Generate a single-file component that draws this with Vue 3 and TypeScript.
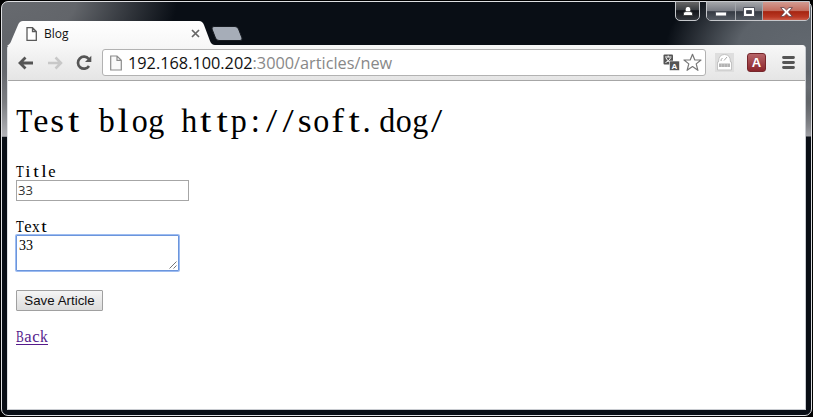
<script setup lang="ts">
interface Glyph {
  char: string
  x: number
  width: number
}

// Drawn advance, in em, of the letters that differ from the default width.
const advances: Record<string, number> = {
  T: 0.485,
  B: 0.485,
  i: 0.33,
  l: 0.34,
  t: 0.345,
  f: 0.39,
  s: 0.42,
  e: 0.46,
  '/': 0.34,
  ':': 0.278,
  '.': 0.25,
  ' ': 0.25,
  a: 0.46,
  c: 0.46,
}

function layOut(text: string, size: number): Glyph[] {
  const cell = size / 2
  return Array.from(text, (char, i) => {
    const width = (advances[char] ?? 0.485) * size
    const inset = char === '.' ? 0 : (cell - width) / 2
    return { char, x: i * cell + inset, width }
  })
}

const heading = layOut('Test blog http://soft.dog/', 33)
const titleLabel = layOut('Title', 16)
const textLabel = layOut('Text', 16)
const backLabel = layOut('Back', 16)

const title: string = '33'
const body: string = '33'
</script>

<template>
  <div class="desktop">
    <div class="window">
      <header class="titlebar">
        <div class="tab">
          <svg class="tab-shape" width="210" height="25" viewBox="0 0 210 25">
            <defs>
              <linearGradient id="tabfill" x1="0" y1="0" x2="0" y2="1">
                <stop offset="0" stop-color="#fff" />
                <stop offset="1" stop-color="#f7f7f7" />
              </linearGradient>
            </defs>
            <path d="M0 25C3 23 4 21 5 18L11 4Q12.5 0 16 0H192Q195.500 0 197 4L203 20Q204.500 24 208 24V25Z" fill="url(#tabfill)" />
          </svg>
          <svg class="tab-page" width="12" height="14" viewBox="0 0 12 14">
            <path d="M1 .7H6.500L10.300 4.500V13.300H1ZM6.500 .7V4.500H10.300" fill="#fff" stroke="#5a5a5a" stroke-width="1.3" />
          </svg>
          <span class="tab-name">Blog</span>
          <svg class="tab-close" width="9" height="9" viewBox="0 0 9 9">
            <path d="M1 1L8 8M8 1L1 8" stroke="#666" stroke-width="1.7" />
          </svg>
        </div>
        <svg class="new-tab" width="32" height="15" viewBox="0 0 32 15">
          <path d="M3 .5H24Q26.500 .5 27.500 3L31 12Q31.500 14.500 29 14.500H8Q5.500 14.500 4.500 12L1 3Q.5 .5 3 .5Z" fill="#a6adb8" stroke="#171b21" />
        </svg>
        <div class="controls">
          <div class="control user">
            <svg width="12" height="10" viewBox="0 0 12 10">
              <path d="M1.500 9.500V7Q2 5.700 4 5.500Q3.200 4.500 3.200 3.200A2.800 2.800 0 0 1 8.800 3.200Q8.800 4.500 8 5.500Q10 5.700 10.500 7V9.500Z" fill="#fff" stroke="#333" stroke-width=".8" />
              <path d="M4 5.600H8" stroke="#444" stroke-width=".8" />
            </svg>
          </div>
          <div class="group">
            <div class="control minimize">
              <svg width="12" height="10" viewBox="0 0 12 10">
                <rect x=".5" y="5" width="11" height="4" fill="#fff" stroke="#51545e" />
              </svg>
            </div>
            <div class="control maximize">
              <svg width="12" height="10" viewBox="0 0 12 10">
                <path d="M.5 .5H11.500V9.500H.5ZM3.500 3.500V6.500H8.500V3.500Z" fill="#fff" stroke="#51545e" fill-rule="evenodd" />
              </svg>
            </div>
            <div class="control close">
              <svg width="13" height="10" viewBox="0 0 13 10">
                <path d="M.6 .6H4L6.500 3L9 .6H12.400L8.500 5L12.400 9.400H9L6.500 7L4 9.400H.6L4.500 5Z" fill="#fff" stroke="#66434a" stroke-width=".9" />
              </svg>
            </div>
          </div>
        </div>
      </header>

      <div class="browser">
        <nav class="toolbar">
          <svg class="nav-icon" width="16" height="14" viewBox="0 0 16 14">
            <path d="M15 7H2.500M7.500 1.500L2 7L7.500 12.500" fill="none" stroke="#555" stroke-width="2.8" />
          </svg>
          <svg class="nav-icon forward" width="16" height="14" viewBox="0 0 16 14">
            <path d="M1 7H13.500M8.500 1.500L14 7L8.500 12.500" fill="none" stroke="#c8c8c8" stroke-width="2.5" />
          </svg>
          <svg class="nav-icon reload" width="16" height="16" viewBox="0 0 16 16">
            <path d="M12.700 4A6 6 0 1 0 13 11" fill="none" stroke="#555" stroke-width="2.700" />
            <path d="M15.300 .7V7H9Z" fill="#555" />
          </svg>
          <div class="address">
            <svg class="address-page" width="12" height="16" viewBox="0 0 12 16">
              <path d="M.7 1H7L11.300 5.300V15H.7ZM7 1V5.300H11.300" fill="#fafafa" stroke="#8c8c8c" stroke-width="1.200" />
            </svg>
            <span class="url">192.168.100.202<span class="path">:3000/articles/new</span></span>
            <svg class="translate" width="17" height="17" viewBox="0 0 17 17">
              <rect x=".5" y=".5" width="9.500" height="10" rx="1" fill="#555" />
              <path d="M2 3H8.500M5.200 1.500V3M3 4Q4.500 7.500 8 8.500M7.500 4Q6 7.500 2.500 8.500" fill="none" stroke="#fff" stroke-width="1" />
              <rect x="6.500" y="7" width="10" height="9.500" rx="1" fill="#555" stroke="#fff" stroke-width=".6" />
              <text x="11.500" y="14.700" text-anchor="middle" font-family="Liberation Sans, sans-serif" font-weight="bold" font-size="8" fill="#fff">A</text>
            </svg>
            <svg class="star" width="19" height="19" viewBox="0 0 19 19">
              <path d="M9.500 1.300L11.800 7H18L13.200 10.900L14.900 17.300L9.500 13.600L4.100 17.300L5.800 10.900L1 7H7.200Z" fill="#fff" stroke="#777" stroke-width="1.200" stroke-linejoin="round" />
            </svg>
          </div>
          <svg class="lock" width="19" height="19" viewBox="0 0 19 19">
            <rect width="19" height="19" fill="#dedede" />
            <path d="M3.500 9Q3.500 1.500 9.500 1.500T15.500 9H16.500V17H2.500V9Z" fill="#fff" stroke="#c3c3c3" />
            <path d="M6 8A3.500 3.500 0 0 1 7.500 5M9 7.500L12 4" fill="none" stroke="#aaa" />
            <path d="M4 10.500H15V14H4Z" fill="#b3b3b3" />
            <path d="M6.500 11V14M9.500 11V14M12.500 11V14" stroke="#ccc" stroke-width=".7" />
          </svg>
          <div class="extension">A</div>
          <svg class="menu" width="13" height="13" viewBox="0 0 13 13">
            <path d="M1.500 1.500H11.500M1.500 6.500H11.500M1.500 11.500H11.500" stroke="#555" stroke-width="2.800" stroke-linecap="round" />
          </svg>
        </nav>

        <main class="page">
          <h1 class="heading">
            <svg width="440" height="44">
              <text y="31"><tspan v-for="(g, i) in heading" :key="i" :x="g.x" :textLength="g.width" lengthAdjust="spacingAndGlyphs">{{ g.char }}</tspan></text>
            </svg>
          </h1>
          <form @submit.prevent>
            <label class="field">
              <svg class="label" width="48" height="17"><text y="14"><tspan v-for="(g, i) in titleLabel" :key="i" :x="g.x" :textLength="g.width" lengthAdjust="spacingAndGlyphs">{{ g.char }}</tspan></text></svg>
              <input class="title-input" type="text" :value="title" />
            </label>
            <label class="field body-field">
              <svg class="label" width="48" height="16"><text y="14"><tspan v-for="(g, i) in textLabel" :key="i" :x="g.x" :textLength="g.width" lengthAdjust="spacingAndGlyphs">{{ g.char }}</tspan></text></svg>
              <span class="area">
                <textarea class="body-input" spellcheck="false" :value="body"></textarea>
                <svg class="grip" width="8" height="8" viewBox="0 0 8 8">
                  <path d="M.5 7.500L7.500 .5M4.500 7.500L7.500 4.500" stroke="#666" stroke-width=".9" />
                </svg>
              </span>
            </label>
            <button class="save" type="submit">Save Article</button>
          </form>
          <a class="back" href="#">
            <svg class="label" width="32" height="18"><text y="13"><tspan v-for="(g, i) in backLabel" :key="i" :x="g.x" :textLength="g.width" lengthAdjust="spacingAndGlyphs">{{ g.char }}</tspan></text></svg>
          </a>
        </main>
      </div>
    </div>
  </div>
</template>

<style>
body {
  background: #000;
  overflow: hidden;
}
</style>

<style scoped>
.desktop,
.desktop * {
  box-sizing: border-box;
}
.desktop {
  height: 417px;
  padding: 1px;
  background: #000;
}
.desktop svg {
  display: block;
  flex: none;
  overflow: visible;
}
.window {
  display: flex;
  flex-direction: column;
  height: 415px;
  padding: 0 5px 5px 5px;
  border: 1px solid #dedfe2;
  border-radius: 7px;
  background:
    linear-gradient(to bottom, transparent 0 70px, #9996 100px, #c4c4c8cc 134px, transparent 135px),
    radial-gradient(ellipse 175px 90px at 0 0, #676a6f 0, #62656a 42%, transparent 100%) 0 0 / 100% 135px no-repeat,
    radial-gradient(ellipse 145px 80px at 100% 45px, #62686f 0, #5c6269 50%, transparent 100%) 0 0 / 100% 135px no-repeat,
    linear-gradient(90deg, #676a70 0, #676a70 9px, #676a7000 40px) 0 0 / 100% 135px no-repeat,
    #090e15;
}
.titlebar {
  display: flex;
  height: 43px;
  padding-top: 19px;
}
.tab {
  display: grid;
  grid-template-columns: 19px 18px 1fr 10px 16px;
  align-items: center;
  width: 208px;
  height: 25px;
  flex: none;
  z-index: 1;
}
.tab-shape {
  grid-area: 1 / 1 / 2 / 6;
}
.tab-page {
  grid-area: 1 / 2;
}
.tab-name {
  grid-area: 1 / 3;
  font: 12px/16px 'Open Sans', sans-serif;
  color: #111;
}
.tab-close {
  grid-area: 1 / 4;
}
.new-tab {
  margin: 5px 0 0 -4px;
}
.controls {
  display: flex;
  gap: 6px;
  height: 20px;
  margin: -20px -4px 0 auto;
}
.control {
  display: flex;
  align-items: center;
  justify-content: center;
  height: 20px;
  background: linear-gradient(#a5a7ab 0, #777a82 45%, #353a43 48%, #5b6169 100%);
}
.user {
  width: 25px;
  border: 1px solid #c5c7cb;
  border-radius: 0 0 5px 5px;
  background: linear-gradient(#666 0, #393c40 45%, #111318 48%, #34373c 100%);
}
.group {
  display: flex;
  overflow: hidden;
  width: 104px;
  border: 1px solid #c5c7cb;
  border-radius: 0 0 5px 5px;
}
.minimize,
.maximize {
  border-right: 1px solid #a5a8ad;
}
.minimize {
  width: 29px;
}
.maximize {
  width: 27px;
}
.close {
  flex: 1;
  background: linear-gradient(#d39b91 0, #c46d5e 44%, #a62511 48%, #ba3824 75%, #d87763 100%);
}
.browser {
  flex: 1;
  display: flex;
  flex-direction: column;
  min-height: 0;
  border: 1px solid #c8cbd0;
  border-top: 0;
  border-left-color: #dfe1e4;
  border-radius: 4px 4px 0 0;
  background: #fff;
}
.toolbar {
  display: flex;
  align-items: center;
  height: 36px;
  flex: none;
  padding: 0 9px 0 10px;
  border-bottom: 1px solid #a6a6a6;
  border-radius: 4px 4px 0 0;
  background: linear-gradient(#f7f7f7, #e5e5e5);
}
.forward {
  margin-left: 13px;
}
.reload {
  margin-left: 13px;
}
.address {
  display: flex;
  align-items: center;
  width: 604px;
  height: 27px;
  margin-left: 10px;
  padding: 0 3px 0 7px;
  border: 1px solid #b2b2b2;
  border-radius: 3px;
  background: #fff;
}
.url {
  margin-left: 6px;
  font: 16.3px/24px 'Open Sans', sans-serif;
  color: #111;
  white-space: nowrap;
}
.path {
  color: #888;
}
.translate {
  margin-left: auto;
}
.star {
  margin-left: 3px;
}
.lock {
  margin-left: 9px;
}
.extension {
  display: flex;
  align-items: center;
  justify-content: center;
  width: 19px;
  height: 19px;
  margin-left: 13px;
  border: 1px solid #75262b;
  border-radius: 3px;
  background: linear-gradient(#b76468, #8b252b);
  color: #fff;
  font: bold 13px/17px 'Liberation Sans', sans-serif;
}
.menu {
  margin-left: 16px;
}
.page {
  padding: 20px 8px 0;
  font-family: 'Liberation Serif', serif;
}
.page text {
  white-space: pre;
}
.heading {
  height: 62px;
  margin: 0;
  font-size: 33px;
  font-weight: normal;
}
.label {
  font-size: 16px;
}
.field {
  display: block;
}
.title-input {
  display: block;
  width: 173px;
  height: 21px;
  padding: 0 1px 2px;
  border: 1px solid #a6a6a6;
  outline: 0;
  color: #333;
  font: 13px 'Open Sans', sans-serif;
}
.body-field {
  margin-top: 17px;
}
.area {
  display: grid;
  width: 165px;
  height: 38px;
  margin-left: -1px;
}
.body-input {
  grid-area: 1 / 1;
  padding: 2px;
  border: 1px solid #6b95dc;
  border-radius: 1px;
  margin: 1px;
  box-shadow: 0 0 0 1px #9dbcf1;
  outline: 0;
  resize: none;
  font: 14px/16px 'Liberation Serif', serif;
  color: #000;
  overflow: hidden;
}
.grip {
  grid-area: 1 / 1;
  place-self: end;
  margin: 0 3px 3px 0;
  z-index: 1;
}
.save {
  display: block;
  width: 87px;
  height: 21px;
  margin-top: 18px;
  padding: 0;
  border: 1px solid #a0a0a0;
  border-radius: 1px;
  background: linear-gradient(#f5f5f5, #dcdcdc);
  color: #111;
  font: 13.33px 'Liberation Sans', sans-serif;
}
.back {
  display: block;
  width: 32px;
  height: 16px;
  margin-top: 18px;
  border-bottom: 1px solid #551a8b;
}
.back text {
  fill: #551a8b;
}
</style>
